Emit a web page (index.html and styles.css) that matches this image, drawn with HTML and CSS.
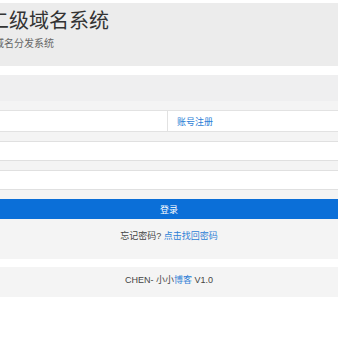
FILE: index.html
```html
<!DOCTYPE html>
<html lang="zh-CN">
<head>
    <meta charset="UTF-8">
    <meta name="viewport" content="width=device-width, initial-scale=1.0">
    <title>二级域名系统</title>
    <link rel="stylesheet" href="styles.css">
</head>
<body>
    <div class="page">
        <!-- Top banner -->
        <div class="jumbotron">
            <h1 class="site-title">二级域名系统</h1>
            <p class="site-subtitle">二级域名分发系统</p>
        </div>

        <!-- Login panel -->
        <div class="panel">
            <div class="panel-heading"></div>
            <div class="panel-body">
                <div class="input-group">
                    <input type="text" class="form-control first-input">
                    <span class="input-addon"><a href="#" class="link">账号注册</a></span>
                </div>
                <input type="password" class="form-control">
                <input type="text" class="form-control">
                <button class="btn-login">登录</button>
                <p class="forgot">忘记密码? <a href="#" class="link">点击找回密码</a></p>
            </div>
        </div>

        <div class="footer">CHEN- 小小<a href="#" class="link">博客</a> V1.0</div>
    </div>
</body>
</html>
```

FILE: styles.css
```css
body {
    margin: 0;
    padding: 0;
    background-color: #fff;
    font-family: "Liberation Sans", "Noto Sans CJK SC", sans-serif;
    color: #333;
    overflow: hidden;
}

.page {
    margin: 0 -10px;
    padding-top: 3px;
}

/* Banner */
.jumbotron {
    background-color: #ececec;
    height: 63px;
    padding-top: 5px;
    box-sizing: border-box;
}

.site-title {
    margin: 0 0 0 -1px;
    font-size: 20px;
    line-height: 26px;
    font-weight: normal;
    color: #333;
}

.site-subtitle {
    margin: 3px 0 0 -16px;
    font-size: 10px;
    line-height: 14px;
    color: #666;
}

/* Panel */
.panel {
    margin-top: 9px;
}

.panel-heading {
    height: 26px;
    background-color: #efeff0;
}

.panel-body {
    background-color: #f4f4f4;
    padding: 9px 0 16px;
    display: flex;
    flex-direction: column;
    gap: 9px;
}

.input-group {
    display: flex;
    height: 22px;
    background-color: #fff;
    border-top: 1px solid #e2e2e2;
    border-bottom: 1px solid #e2e2e2;
    box-sizing: border-box;
}

.form-control {
    display: block;
    height: 20px;
    margin: 0;
    padding: 0;
    border: 1px solid #e0e0e0;
    background-color: #fff;
    box-sizing: border-box;
    outline: none;
}

.first-input {
    flex: 0 0 175px;
    height: 20px;
    border: none;
    border-right: 1px solid #e2e2e2;
}

.input-addon {
    flex: 1;
    display: flex;
    align-items: center;
    padding-left: 9px;
    font-size: 9px;
}

.link {
    color: #2c7ed6;
    text-decoration: none;
}

.btn-login {
    height: 20px;
    border: none;
    padding: 0;
    background-color: #0b6fd8;
    color: #fff;
    font-family: inherit;
    font-size: 9px;
}

.forgot {
    margin: 1px 0 0;
    text-align: center;
    font-size: 9px;
    line-height: 14px;
    color: #444;
}

/* Footer */
.footer {
    margin-top: 8px;
    height: 30px;
    box-sizing: border-box;
    padding-top: 6px;
    background-color: #f4f4f4;
    text-align: center;
    font-size: 9px;
    line-height: 14px;
    color: #444;
}
```
